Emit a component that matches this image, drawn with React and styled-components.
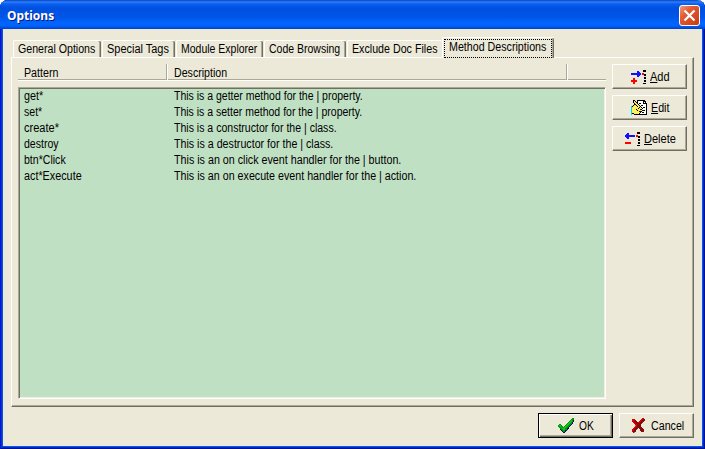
import React from 'react';
import styled, { createGlobalStyle } from 'styled-components';

const Global = createGlobalStyle`
  * { box-sizing: border-box; }
  body { margin: 0; background: #fff; overflow: hidden; }
`;

const Window = styled.div`
  width: 705px;
  height: 449px;
  padding: 0 3px 3px;
  font: 12px/16px "Liberation Sans", Arial, sans-serif;
  color: #000;
  background: #ece9d8;
  border-radius: 8px 8px 0 0;
  box-shadow: inset 1px 0 #0019cf, inset -1px -1px #00138c, inset 2px 0 #0831d9,
    inset -2px -2px #0029c0, inset 3px 0 #0855dd, inset -3px -3px #0855ee;
`;

const TitleBar = styled.header`
  height: 29px;
  margin: 0 -3px;
  padding: 5px 5px 0 7px;
  display: flex;
  justify-content: space-between;
  border-radius: 8px 8px 0 0;
  background: linear-gradient(#0842c8 0, #2b80f8 2px, #0a5ef0 4px, #0050e0 8px, #0055e8 17px, #0066ff 23px, #0060fa 26px, #0040c8 29px);
`;

const Title = styled.h1`
  margin: 3px 0 0;
  font: bold 12px/16px "Noto Sans", sans-serif;
  color: #fff;
  text-shadow: 1px 1px #0a1883;
`;

const CloseButton = styled.button`
  width: 21px;
  height: 21px;
  padding: 0;
  display: grid;
  place-items: center;
  border: 1px solid #fff;
  border-radius: 3px;
  background: linear-gradient(135deg, #ee9a7c, #e35a34 35%, #c93a12);
`;

const Body = styled.main`
  padding: 8px 8px 0;
`;

const TabStrip = styled.nav`
  height: 20px;
  display: flex;
  align-items: flex-end;
  gap: 1px;
  padding-left: 2px;
`;

const Tab = styled.div`
  flex: none;
  width: ${p => p.$width}px;
  height: 17px;
  padding-left: 4.4px;
  border: solid #fff;
  border-width: 1px 0 0 1px;
  border-radius: 2px 2px 0 0;
  box-shadow: ${p => (p.$last ? 'none' : 'inset -1px 0 #716f64, inset -2px 0 #aca899')};
`;

const ActiveTab = styled.div`
  position: relative;
  flex: none;
  width: 112px;
  height: 21px;
  margin: 0 0 -1px -1px;
  padding: 1px 2px 0 1px;
  border: solid #fff;
  border-width: 1px 0 0 1px;
  border-radius: 2px 2px 0 0;
  background: #ece9d8;
  box-shadow: inset -1px 0 #716f64, inset -2px 0 #aca899;
`;

const FocusRing = styled.div`
  height: 19px;
  width: 108px;
  padding-left: 4px;
  border: 1px dotted #000;
  line-height: 14px;
`;

const Text = styled.span`
  display: inline-block;
  white-space: pre;
  transform: scaleX(${p => p.$scale ?? 0.89});
  transform-origin: left;
`;

const Page = styled.section`
  width: 683px;
  height: 350px;
  padding: 6px;
  display: flex;
  gap: 6px;
  border: 1px solid;
  border-color: #fff #716f64 #716f64 #fff;
  box-shadow: inset -1px -1px #aca899;
`;

const ListColumn = styled.div`
  width: 588px;
  display: flex;
  flex-direction: column;
`;

const ListHeader = styled.div`
  height: 17px;
  margin-bottom: 6px;
  display: grid;
  grid-template-columns: 149px 400px 1fr;
  border-bottom: 1px solid #fff;
  box-shadow: inset 0 -1px #aca899;
`;

const HeaderCell = styled.div`
  height: 16px;
  padding-left: 6px;
  line-height: 19px;
  border: solid;
  border-color: #aca899 #aca899 #aca899 #fff;
  border-width: 0 ${p => (p.$end ? 0 : 1)}px 0 ${p => (p.$first ? 0 : 1)}px;
`;

const List = styled.div`
  height: 312px;
  padding-left: 5px;
  border: 1px solid;
  border-color: #aca899 #fff #fff #aca899;
  background: #c0e0c4;
  box-shadow: inset 1px 1px #716f64, inset -1px -1px #f1efe2;
`;

const ListRow = styled.div`
  display: grid;
  grid-template-columns: 150px 1fr;
  height: 16px;
`;

const Actions = styled.div`
  display: flex;
  flex-direction: column;
  gap: 6px;
`;

const Button = styled.button`
  width: 75px;
  height: 25px;
  padding: 0 0 0 ${p => p.$inset}px;
  display: flex;
  align-items: center;
  gap: ${p => p.$gap ?? 4}px;
  border: 1px solid;
  border-color: ${p => (p.$primary ? '#000' : '#fff #716f64 #716f64 #fff')};
  background: #ece9d8;
  box-shadow: ${p => (p.$primary
    ? 'inset 1px 1px #fff, inset -1px -1px #716f64, inset -2px -2px #aca899'
    : 'inset -1px -1px #aca899')};
  font: inherit;
  color: inherit;
  text-align: left;
  svg { flex: none; }
  u { text-underline-offset: 1px; text-decoration-skip-ink: none; }
`;

const Footer = styled.footer`
  display: flex;
  justify-content: flex-end;
  gap: 6px;
  padding-top: 6px;
`;

const palette = {
  b: '#1010ff', r: '#ff0000', k: '#000', w: '#fff', y: '#ffef5a', c: '#00d8e8',
  g: '#009810', l: '#18c418', n: '#10105c', m: '#8c0808', e: '#d80000', s: '#5c3030', t: '#a88888',
};

const PixelIcon = ({ rows }) => (
  <svg width={rows[0].length} height={rows.length} shapeRendering="crispEdges">
    {rows.flatMap((row, y) => [...row].map((c, x) => palette[c]
      && <rect key={`${x}-${y}`} x={x} y={y} width="1" height="1" fill={palette[c]} />))}
  </svg>
);

const addIcon = [
  '............kkk',
  '......bb....kkk',
  '......bbb......',
  'bbbbbbbbbb.rr..',
  'bbbbbbbbbb.rrkk',
  '......bbb....kk',
  '......bb.......',
  '.............kk',
  '..rr.........kk',
  '..rr...........',
  'rrrrrr.......kk',
  'rrrrrr.......kk',
  '..rr...........',
  '..rr........kkk',
];

const deleteIcon = [
  '............kkk',
  '..bb........kkk',
  '.bbb...........',
  'bbbbbbbbbb.rr..',
  'bbbbbbbbbb.rrkk',
  '.bbb.........kk',
  '..bb...........',
  '.............kk',
  '.............kk',
  '...............',
  'rrrrrr.......kk',
  'rrrrrr.......kk',
  '...............',
  '............kkk',
];

const editIcon = [
  '..kk..kkkkkkkk..',
  '..kyk.kwwwwwkkk.',
  '..kyykkwwwwwkwk.',
  '...kyykwkkwwkkkk',
  '...kkyykwwwwwwwk',
  '..kyykyykwkkwwwk',
  'ckyyyykyykwwwwwk',
  'cyyyyyyykykwkkwk',
  'cyyyyyykyyykwwwk',
  'cyyyykyyykkwwwwk',
  'cyyyyykyyyykkkwk',
  'cyyyyyyykkkwwwwk',
  'cyyyyyyyykwkkwwk',
  'ckkyyyyykwwwwwwk',
  'c..kkkkkkkkkkkkk',
];

const checkIcon = [
  '..............gg',
  '.............ggg',
  '............glgn',
  '...........gllgn',
  '..........gllgn.',
  '.........gllggn.',
  '.gg.....gllggn..',
  'gllg...gllggn...',
  'gglgg.gllggn....',
  '.gglggllggn.....',
  '..gglllggnn.....',
  '..nggllggn......',
  '...ngggnn.......',
  '....nggn........',
  '.....nn.........',
];

const crossIcon = [
  '..........ee.',
  'eee......eemm',
  'eeem....eemmm',
  'eemmm..eemms.',
  '.eemmmeemms..',
  '..eemmmmms...',
  '...eemmmm....',
  '...temmmm....',
  '...eemmmm....',
  '..eemmmmmm...',
  '.eemms.mmmm..',
  'eemms...mmmm.',
  'eemm....mmmm.',
  'emms.....mms.',
  '.mt..........',
];

const tabs = [
  { label: 'General Options', width: 88, scale: 0.885 },
  { label: 'Special Tags', width: 73, scale: 0.912 },
  { label: 'Module Explorer', width: 87, scale: 0.874 },
  { label: 'Code Browsing', width: 82, scale: 0.875 },
  { label: 'Exclude Doc Files', width: 95, scale: 0.89, last: true },
];

const methods = [
  { pattern: 'get*', ps: 0.9, text: 'This is a getter method for the | property.', ts: 0.875 },
  { pattern: 'set*', ps: 0.88, text: 'This is a setter method for the | property.', ts: 0.875 },
  { pattern: 'create*', ps: 0.92, text: 'This is a constructor for the | class.', ts: 0.878 },
  { pattern: 'destroy', ps: 0.88, text: 'This is a destructor for the | class.', ts: 0.889 },
  { pattern: 'btn*Click', ps: 0.88, text: 'This is an on click event handler for the | button.', ts: 0.893 },
  { pattern: 'act*Execute', ps: 0.9, text: 'This is an on execute event handler for the | action.', ts: 0.891 },
];

export default function App() {
  return (
    <>
      <Global />
      <Window>
        <TitleBar>
          <Title>Options</Title>
          <CloseButton aria-label="Close">
            <svg width="13" height="13" viewBox="0 0 13 13" stroke="#fff" strokeWidth="2.2">
              <path d="M1.5 1.5 11.5 11.5M11.5 1.5 1.5 11.5" />
            </svg>
          </CloseButton>
        </TitleBar>
        <Body>
          <TabStrip>
            {tabs.map(t => (
              <Tab key={t.label} $width={t.width} $last={t.last}>
                <Text $scale={t.scale}>{t.label}</Text>
              </Tab>
            ))}
            <ActiveTab>
              <FocusRing><Text>Method Descriptions</Text></FocusRing>
            </ActiveTab>
          </TabStrip>
          <Page>
            <ListColumn>
              <ListHeader>
                <HeaderCell $first><Text>Pattern</Text></HeaderCell>
                <HeaderCell><Text $scale={0.885}>Description</Text></HeaderCell>
                <HeaderCell $end />
              </ListHeader>
              <List>
                {methods.map(m => (
                  <ListRow key={m.pattern}>
                    <div><Text $scale={m.ps}>{m.pattern}</Text></div>
                    <div><Text $scale={m.ts}>{m.text}</Text></div>
                  </ListRow>
                ))}
              </List>
            </ListColumn>
            <Actions>
              <Button $inset={18}><PixelIcon rows={addIcon} /><Text $scale={0.92}><u>A</u>dd</Text></Button>
              <Button $inset={18}><PixelIcon rows={editIcon} /><Text><u>E</u>dit</Text></Button>
              <Button $inset={12}><PixelIcon rows={deleteIcon} /><Text $scale={0.92}><u>D</u>elete</Text></Button>
            </Actions>
          </Page>
          <Footer>
            <Button $primary $inset={19} $gap={5}><PixelIcon rows={checkIcon} /><Text $scale={0.85}>OK</Text></Button>
            <Button $inset={12} $gap={6}><PixelIcon rows={crossIcon} /><Text>Cancel</Text></Button>
          </Footer>
        </Body>
      </Window>
    </>
  );
}
